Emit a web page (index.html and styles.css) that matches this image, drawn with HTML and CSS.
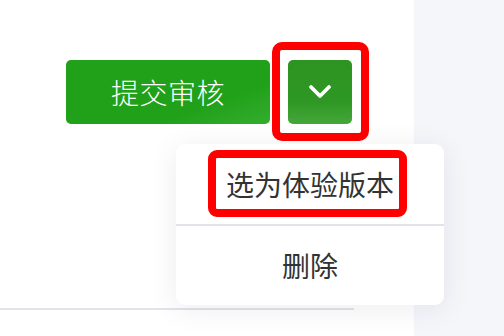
FILE: index.html
```html
<!DOCTYPE html>
<html lang="zh">
<head>
<meta charset="utf-8">
<link rel="stylesheet" href="styles.css">
</head>
<body>
<div class="page">
  <div class="panel">
    <div class="actions">
      <button class="submit">提交审核</button>
      <div class="more-wrap">
        <button class="more" aria-label="更多">
          <svg width="24" height="16" viewBox="0 0 24 16"><path d="M3 3 L12 12 L21 3" fill="none" stroke="#fff" stroke-width="3.8" stroke-linecap="round" stroke-linejoin="round"/></svg>
        </button>
      </div>
    </div>
    <div class="spacer"></div>
    <div class="rule"></div>
  </div>
  <div class="side"></div>
  <div class="menu">
    <div class="item"><span class="label">选为体验版本</span></div>
    <div class="divider"></div>
    <div class="item"><span>删除</span></div>
  </div>
</div>
</body>
</html>
```

FILE: styles.css
```css
* { box-sizing: border-box; }
html, body { margin: 0; padding: 0; }
body {
  width: 504px;
  height: 336px;
  overflow: hidden;
  font-family: "Noto Sans CJK SC", "Noto Sans", sans-serif;
  background: #f5f6fa;
}
.page {
  position: relative;
  display: flex;
  width: 504px;
  height: 336px;
}
.panel {
  width: 414px;
  height: 336px;
  background: #fff;
  display: flex;
  flex-direction: column;
  box-shadow: 1px 0 2px rgba(0,0,0,0.04);
}
.side {
  flex: 1;
  background: #f5f6fa;
}
.actions {
  display: flex;
  gap: 18px;
  padding: 60px 0 0 66px;
}
button {
  border: 0;
  margin: 0;
  font-family: inherit;
  cursor: pointer;
}
.submit {
  width: 204px;
  height: 64px;
  border-radius: 5px;
  background: linear-gradient(160deg, #21a11a 0%, #21a11a 70%, #34ad2e 100%);
  color: #fff;
  font-size: 28px;
  font-weight: 300;
  letter-spacing: 0.5px;
  padding: 0;
}
.more-wrap {
  position: relative;
  width: 64px;
  height: 64px;
}
.more-wrap::after {
  content: "";
  position: absolute;
  left: -16px;
  top: -18px;
  right: -17px;
  bottom: -17px;
  border: 8px solid #ff0000;
  border-radius: 10px;
  pointer-events: none;
}
.more {
  width: 64px;
  height: 64px;
  border-radius: 5px;
  background: linear-gradient(180deg, #2d9421 0%, #2f9724 65%, #44a73a 100%);
  display: flex;
  align-items: center;
  justify-content: center;
  padding: 0;
}
.spacer { flex: 1; }
.rule {
  width: 354px;
  height: 2px;
  background: #e2e3e8;
  margin-bottom: 26px;
}
.menu {
  position: absolute;
  left: 176px;
  top: 144px;
  width: 268px;
  height: 161px;
  background: #fff;
  border-radius: 9px;
  box-shadow: 0 4px 30px rgba(20,30,60,0.08);
  display: flex;
  flex-direction: column;
}
.item {
  flex: 1;
  display: flex;
  align-items: center;
  justify-content: center;
  font-size: 28px;
  color: #333;
  position: relative;
}
.divider {
  height: 2px;
  background: #e2e2e8;
}
.label { position: relative; }
.label::after {
  content: "";
  position: absolute;
  left: -18px;
  right: -13px;
  top: -14px;
  bottom: -13px;
  border: 8px solid #ff0000;
  border-radius: 9px;
}
```
